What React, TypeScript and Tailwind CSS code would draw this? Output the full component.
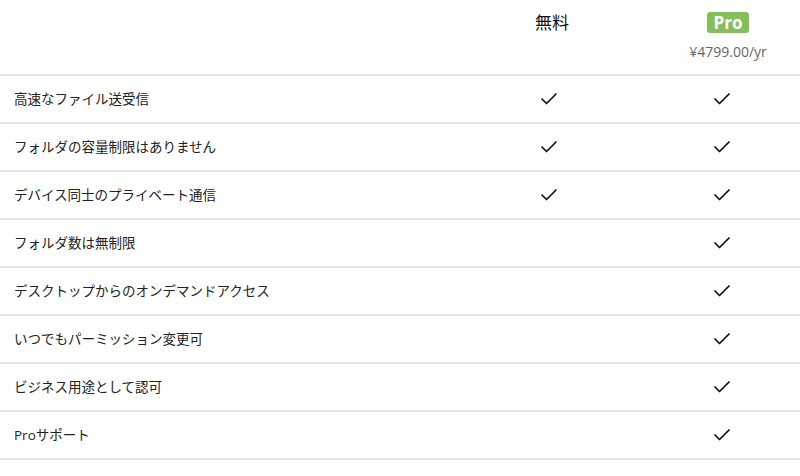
const features = [
  { label: "高速なファイル送受信", free: true, pro: true },
  { label: "フォルダの容量制限はありません", free: true, pro: true },
  { label: "デバイス同士のプライベート通信", free: true, pro: true },
  { label: "フォルダ数は無制限", free: false, pro: true },
  { label: "デスクトップからのオンデマンドアクセス", free: false, pro: true },
  { label: "いつでもパーミッション変更可", free: false, pro: true },
  { label: "ビジネス用途として認可", free: false, pro: true },
  { label: "Proサポート", free: false, pro: true },
];

function Check() {
  return (
    <svg width="16" height="12" viewBox="0 0 16 12" fill="none">
      <polyline
        points="1,6 5.5,10.5 15,1"
        stroke="#111"
        strokeWidth="1.7"
        strokeLinecap="round"
        strokeLinejoin="round"
      />
    </svg>
  );
}

export default function App() {
  return (
    <div className="w-[800px] h-[476px] bg-white font-['Open_Sans','Noto_Sans_CJK_JP',sans-serif] text-[#222]">
      <div className="grid grid-cols-[462px_174px_164px] h-[76px] border-b-2 border-[#e6e6e6]">
        <div />
        <div className="flex justify-center pt-[12px] pl-[6px]">
          <span className="text-[17px] leading-[22px] text-[#111]">無料</span>
        </div>
        <div className="flex flex-col items-center pt-[12px] pl-[20px]">
          <span className="bg-[#84bf5b] text-white font-bold text-[17px] leading-[21px] px-[7px] rounded-[3px]">
            Pro
          </span>
          <span className="mt-[10px] text-[14px] leading-[18px] text-[#666]">¥4799.00/yr</span>
        </div>
      </div>
      {features.map((f) => (
        <div
          key={f.label}
          className="grid grid-cols-[462px_174px_164px] h-[48px] items-center border-b-2 border-[#e6e6e6]"
        >
          <span className="pl-[14px] text-[13.5px]">{f.label}</span>
          <div className="flex justify-center">{f.free && <Check />}</div>
          <div className="flex justify-center pl-[8px]">{f.pro && <Check />}</div>
        </div>
      ))}
    </div>
  );
}
